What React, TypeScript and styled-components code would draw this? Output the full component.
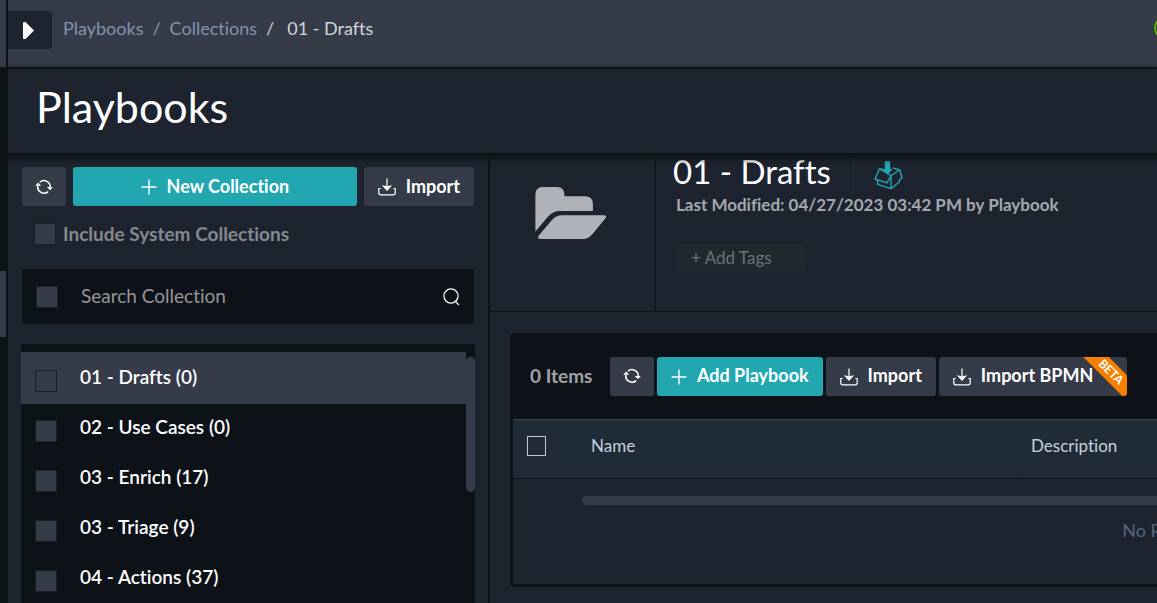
import React from "react";
import styled, { createGlobalStyle } from "styled-components";

const c = {
  ink: "#0d1218",
  panel: "#1d2430",
  raised: "#353b48",
  teal: "#22a7b0",
};

const GlobalStyle = createGlobalStyle`
  * { box-sizing: border-box; }
  html, body { margin: 0; background: ${c.panel}; }
  body { overflow: hidden; font-family: Lato, "Liberation Sans", sans-serif; font-size: 19px; line-height: 24px; font-variant-ligatures: none; color: #fff; }
  button, input { font-variant-ligatures: none; }
  h1, h2, p, ul, ol { margin: 0; padding: 0; font-weight: 400; }
  ul, ol { list-style: none; }
  svg { display: block; flex: none; }
`;

const Shell = styled.div`
  display: flex;
  height: 100vh;
  overflow: hidden;
`;

const Rail = styled.div`
  flex: none;
  width: 8px;
  display: flex;
  flex-direction: column;
  background: ${c.ink};
  border-right: 2px solid ${c.ink};
`;
const RailHead = styled.div`
  height: 67px;
  margin-bottom: 204px;
  background: ${c.raised};
`;
const RailThumb = styled.div`
  height: 66px;
  background: ${c.raised};
`;

const Main = styled.div`
  flex: 1;
  min-width: 0;
  display: flex;
  flex-direction: column;
`;

const TopBar = styled.header`
  flex: none;
  display: flex;
  align-items: flex-start;
  height: 69px;
  overflow: hidden;
  background: ${c.raised};
  border-bottom: 2px solid ${c.ink};
`;
const ExpandButton = styled.button`
  flex: none;
  width: 44px;
  height: 38px;
  margin: 11px 11px 0 0;
  padding: 0 0 0 15px;
  border: 0;
  border-radius: 0 3px 3px 0;
  background: ${c.panel};
`;
const Crumbs = styled.ol`
  flex: 1;
  display: flex;
  gap: 9px;
  padding-top: 16px;
  color: #c9ccd1;
  font-size: 18px;
`;
const Crumb = styled.li`
  display: flex;
  gap: 9px;
  color: #8393ab;
  &[aria-current] { padding-left: 4px; color: #d3d5d9; }
`;
const CrumbLink = styled.a`
  color: inherit;
  text-decoration: none;
`;
const Status = styled.div`
  flex: none;
  width: 24px;
  height: 24px;
  margin: 16px -21px 0 0;
  border: 2px solid #56b30f;
  border-radius: 50%;
`;

const TitleBar = styled.div`
  flex: none;
  position: relative;
  z-index: 1;
  height: 86px;
  padding: 12px 28px;
  background: ${c.panel};
  border-bottom: 2px solid ${c.ink};
  box-shadow: 0 2px 6px 2px #111315;
`;
const PageTitle = styled.h1`
  font-size: 43px;
  line-height: 52px;
`;

const Columns = styled.div`
  flex: 1;
  min-height: 0;
  display: flex;
`;
const Side = styled.aside`
  flex: none;
  width: 482px;
  display: flex;
  flex-direction: column;
  padding: 12px 14px 0;
  border-right: 2px solid ${c.ink};
`;
const SideActions = styled.div`
  display: flex;
  gap: 7px;
`;

const Button = styled.button<{ $primary?: boolean; $grow?: boolean }>`
  flex: ${(p) => (p.$grow ? "1" : "none")};
  position: relative;
  overflow: hidden;
  display: flex;
  align-items: center;
  justify-content: center;
  gap: 10px;
  height: 39px;
  padding: 0 14px 2px;
  border: 0;
  border-radius: 3px;
  background: ${(p) => (p.$primary ? c.teal : c.raised)};
  color: #fff;
  font: 700 18px/24px Lato, "Liberation Sans", sans-serif;
  font-variant-ligatures: none;
  white-space: nowrap;
  svg { margin-top: 3px; }
`;
const IconButton = styled(Button)`
  width: 44px;
  padding: 0;
  svg { margin: 0; }
`;
const WideButton = styled(Button)`
  padding-right: 34px;
`;
const Beta = styled.span`
  position: absolute;
  top: 6px;
  right: -22px;
  width: 76px;
  transform: rotate(45deg);
  background: #f77f00;
  font-size: 12px;
  line-height: 18px;
  text-align: center;
`;

const Check = styled.input<{ $outline?: boolean }>`
  appearance: none;
  flex: none;
  width: ${(p) => (p.$outline ? 19 : 22)}px;
  height: ${(p) => (p.$outline ? 20 : 22)}px;
  margin: 0;
  border: 1px solid ${(p) => (p.$outline ? "#c4c7cb" : "#1a1e25")};
  background: ${(p) => (p.$outline ? "transparent" : c.raised)};
`;

const SystemToggle = styled.label`
  display: flex;
  align-items: center;
  gap: 7px;
  height: 26px;
  margin: 15px 0 22px 12px;
  color: #85898f;
  font-weight: 700;
  line-height: 26px;
`;
const SearchRow = styled.div`
  flex: none;
  display: flex;
  align-items: center;
  height: 55px;
  padding: 0 14px;
  background: ${c.ink};
`;
const SearchInput = styled.input`
  flex: 1;
  min-width: 0;
  height: 32px;
  margin: 0;
  padding: 0 0 3px 23px;
  border: 0;
  background: transparent;
  color: #fff;
  font: 400 19px/24px Lato, "Liberation Sans", sans-serif;
  font-variant-ligatures: none;
  &::placeholder { color: #969696; opacity: 1; }
`;
const SearchButton = styled.button`
  padding: 0;
  border: 0;
  background: none;
`;

const ListBox = styled.div`
  flex: 1;
  min-height: 0;
  overflow: hidden;
  display: flex;
  margin: 20px -1px 0;
  padding-top: 8px;
  background: ${c.ink};
`;
const List = styled.ul`
  flex: 1;
`;
const Item = styled.li<{ $active?: boolean }>`
  height: ${(p) => (p.$active ? 52 : 50)}px;
  background: ${(p) => (p.$active ? c.raised : "transparent")};
`;
const ItemLabel = styled.label`
  display: flex;
  align-items: flex-start;
  gap: 23px;
  height: 100%;
  padding: 11px 14px 0;
  font-weight: 600;
  input { margin-top: 5px; }
  li:first-child > & { padding-top: 13px; }
`;
const ListThumb = styled.div`
  width: 9px;
  height: 135px;
  margin-top: 5px;
  border-radius: 5px;
  background: ${c.raised};
`;

const Detail = styled.main`
  flex: 1;
  min-width: 0;
  overflow: hidden;
`;
const Hero = styled.section`
  display: flex;
  height: 157px;
  border-bottom: 1px solid ${c.ink};
`;
const HeroIcon = styled.div`
  flex: none;
  width: 166px;
  padding: 32px 0 0 45px;
  border-right: 1px solid ${c.ink};
`;
const HeroBody = styled.div`
  padding: 0 17px;
`;
const HeroTitleRow = styled.div`
  display: flex;
  align-items: flex-start;
  height: 38px;
`;
const HeroTitle = styled.h2`
  padding-right: 22px;
  font-size: 33px;
  line-height: 32px;
  white-space: nowrap;
`;
const ExportButton = styled.button`
  display: flex;
  height: 36px;
  margin-top: 3px;
  padding: 3px 0 0 20px;
  border: 0;
  border-left: 1px solid #292f3a;
  background: none;
`;
const Modified = styled.p`
  padding: 2px 3px;
  color: #a5a8ad;
  font-size: 17px;
  line-height: 20px;
  font-weight: 700;
  white-space: nowrap;
`;
const AddTags = styled.button`
  display: block;
  width: 127px;
  height: 28px;
  margin: 27px 5px 0;
  padding: 0 13px;
  border: 0;
  border-radius: 3px;
  background: #212830;
  color: #6e7175;
  font: 400 17px/26px Lato, "Liberation Sans", sans-serif;
  text-align: left;
`;

const Card = styled.section`
  min-width: 1370px;
  margin: 21px 20px;
  padding: 0 3px 3px;
  border-radius: 4px;
  background: ${c.ink};
`;
const Toolbar = styled.div`
  display: flex;
  align-items: center;
  gap: 3px;
  height: 86px;
  padding-left: 17px;
`;
const Count = styled.span`
  width: 77px;
  color: #a0a3a6;
  font-weight: 700;
`;
const Table = styled.table`
  width: 100%;
  table-layout: fixed;
  border-collapse: separate;
  border-spacing: 0;
  text-align: left;
`;
const Head = styled.th<{ $w?: number; $x: number }>`
  width: ${(p) => (p.$w ? `${p.$w}px` : "auto")};
  height: 60px;
  padding: 0 0 6px ${(p) => p.$x}px;
  border-top: 1px solid #3d4657;
  border-bottom: 1px solid ${c.ink};
  background: #202b38;
  color: #c6d0de;
  font-size: 17px;
  line-height: 20px;
  font-weight: 400;
  &:last-child { border-left: 1px solid #1d2632; }
  input { display: block; }
`;
const EmptyCell = styled.td`
  height: 105px;
  padding: 17px 0 0 69px;
  vertical-align: top;
  background: ${c.panel};
`;
const ScrollThumb = styled.div`
  height: 9px;
  border-radius: 5px;
  background: ${c.raised};
`;
const EmptyText = styled.p`
  margin: 13px 0 0 -69px;
  color: #58667c;
  font-size: 18px;
  text-align: center;
`;

const RefreshIcon = () => (
  <svg width="18" height="16" viewBox="0 0 18 16" fill="none" stroke="#fff" strokeWidth="1.5" aria-hidden="true">
    <path d="M4.8 3.2A6.3 6.3 0 0 1 15.2 8.6" />
    <path d="M13.2 12.6A6.3 6.3 0 0 1 2.8 7" />
    <path d="M11.8 8.1h6l-2.8 3.1zM.2 6.7h6L3.1 3.6z" fill="#fff" stroke="none" />
  </svg>
);
const PlusIcon = () => (
  <svg width="16" height="16" viewBox="0 0 16 16" stroke="#fff" strokeWidth="1.4" aria-hidden="true">
    <path d="M8 .5v15M.5 8h15" />
  </svg>
);
const ImportIcon = () => (
  <svg width="18" height="18" viewBox="0 0 18 18" fill="none" stroke="#fff" strokeWidth="1.2" aria-hidden="true">
    <path d="M2.600 10.500H.8v4.300a2 2 0 0 0 2 2h12.400a2 2 0 0 0 2-2v-4.300h-1.800" />
    <path d="M9 .5V9" />
    <path d="M3.800 7.300 9 8.200l5.200-.9L9 13z" fill="#fff" stroke="none" />
  </svg>
);
const SearchIcon = () => (
  <svg width="17" height="18" viewBox="0 0 17 18" fill="none" stroke="#fff" strokeWidth="1.2" aria-hidden="true">
    <circle cx="8" cy="8" r="7.1" />
    <path d="M11.6 12.6 16 17" />
  </svg>
);
const FolderIcon = () => (
  <svg width="72" height="52" viewBox="0 0 72 52" fill="#afb2b8" aria-hidden="true">
    <path d="M.4 7.5Q.4 0 7.9 0h14Q29.400 0 29.400 7.500V9.300h20.500q8 0 8 8v6.800H25.500q-7.800 0-12.600 5.600L.4 44.600z" />
    <path d="M27 28.200h42.500q2.600.5 1 3L57.500 47q-4 5-9.500 5H4.600q-2.400-.8-1-3.200L16.500 33.500Q21 28.200 27 28.200z" />
  </svg>
);
const BoxIcon = () => (
  <svg width="29" height="29" viewBox="0 0 29 29" fill="none" stroke={c.teal} strokeWidth="1.4" strokeLinejoin="round" aria-hidden="true">
    <path d="M10.800 0h5.400v8h2.600l-5.300 5.600L8.200 8h2.600z" fill={c.teal} stroke="none" />
    <path d="M8.500 8H5.400L17 14.500 25.800 9 19 7" />
    <path d="M5.400 8 .9 18 13 21.800 17 14.500V27.700" />
    <path d="M3.600 19v4.400L17 27.700l8.500-7v-2.700" />
    <path d="M25.800 9 28 17l-3 2.200" />
  </svg>
);

const collections = ["01 - Drafts (0)", "02 - Use Cases (0)", "03 - Enrich (17)", "03 - Triage (9)", "04 - Actions (37)"];

export default function App() {
  return (
    <>
      <GlobalStyle />
      <Shell>
        <Rail>
          <RailHead />
          <RailThumb />
        </Rail>
        <Main>
          <TopBar>
            <ExpandButton aria-label="Expand menu">
              <svg width="11" height="17" viewBox="0 0 11 17" fill="#fff" aria-hidden="true">
                <path d="M0 .8Q0 0 1 0h1.500L11 8.500 2.500 17H1q-1 0-1-.8z" />
              </svg>
            </ExpandButton>
            <Crumbs>
              <Crumb><CrumbLink href="#playbooks">Playbooks</CrumbLink><span>/</span></Crumb>
              <Crumb><CrumbLink href="#collections">Collections</CrumbLink></Crumb>
              <li>/</li>
              <Crumb aria-current="page">01 - Drafts</Crumb>
            </Crumbs>
            <Status />
          </TopBar>
          <TitleBar>
            <PageTitle>Playbooks</PageTitle>
          </TitleBar>
          <Columns>
            <Side>
              <SideActions>
                <IconButton aria-label="Refresh collections"><RefreshIcon /></IconButton>
                <Button $primary $grow><PlusIcon />New Collection</Button>
                <Button><ImportIcon />Import</Button>
              </SideActions>
              <SystemToggle>
                <Check type="checkbox" />
                Include System Collections
              </SystemToggle>
              <SearchRow>
                <Check type="checkbox" aria-label="Select all collections" />
                <SearchInput type="text" aria-label="Search Collection" placeholder="Search Collection" />
                <SearchButton aria-label="Search"><SearchIcon /></SearchButton>
              </SearchRow>
              <ListBox>
                <List>
                  {collections.map((name, i) => (
                    <Item key={name} $active={i === 0}>
                      <ItemLabel><Check type="checkbox" />{name}</ItemLabel>
                    </Item>
                  ))}
                </List>
                <ListThumb />
              </ListBox>
            </Side>
            <Detail>
              <Hero>
                <HeroIcon><FolderIcon /></HeroIcon>
                <HeroBody>
                  <HeroTitleRow>
                    <HeroTitle>01 - Drafts</HeroTitle>
                    <ExportButton aria-label="Export collection"><BoxIcon /></ExportButton>
                  </HeroTitleRow>
                  <Modified>Last Modified: 04/27/2023 03:42 PM by Playbook</Modified>
                  <AddTags>+ Add Tags</AddTags>
                </HeroBody>
              </Hero>
              <Card>
                <Toolbar>
                  <Count>0 Items</Count>
                  <IconButton aria-label="Refresh playbooks"><RefreshIcon /></IconButton>
                  <Button $primary><PlusIcon />Add Playbook</Button>
                  <Button><ImportIcon />Import</Button>
                  <WideButton><ImportIcon />Import BPMN<Beta>BETA</Beta></WideButton>
                </Toolbar>
                <Table>
                  <thead>
                    <tr>
                      <Head $w={69} $x={14}><Check $outline type="checkbox" aria-label="Select all playbooks" /></Head>
                      <Head $w={438} $x={9}>Name</Head>
                      <Head $x={10}>Description</Head>
                    </tr>
                  </thead>
                  <tbody>
                    <tr>
                      <EmptyCell colSpan={3}>
                        <ScrollThumb />
                        <EmptyText>No Records Found</EmptyText>
                      </EmptyCell>
                    </tr>
                  </tbody>
                </Table>
              </Card>
            </Detail>
          </Columns>
        </Main>
      </Shell>
    </>
  );
}
